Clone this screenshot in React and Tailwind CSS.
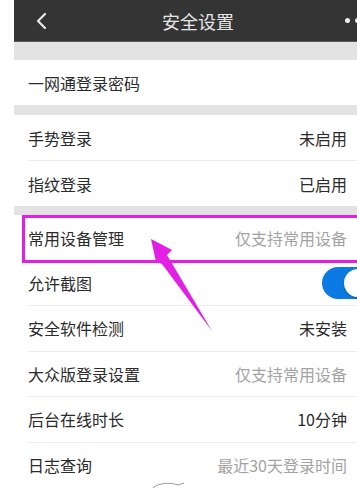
import React from "react";

const font = { fontFamily: '"Noto Sans CJK SC", "Noto Sans", sans-serif' };

function Row({ label, value, gray, divider = true, children }) {
  return (
    <div className="h-[46px] bg-white flex flex-col">
      <div className="flex-1 flex items-center pl-[14px] pr-[10px]">
        <span className="text-[16px] text-[#2b2b2b] leading-none">{label}</span>
        <div className="ml-auto flex items-center">
          {value && (
            <span className={`text-[16px] leading-none ${gray ? "text-[#a3a3a3]" : "text-[#2b2b2b]"}`}>{value}</span>
          )}
          {children}
        </div>
      </div>
      {divider ? <div className="h-px ml-[14px] bg-[#ececec]" /> : null}
    </div>
  );
}

export default function App() {
  return (
    <div className="relative w-[357px] h-[488px] overflow-hidden bg-white flex" style={font}>
      <div className="w-[14px] shrink-0 bg-white" />
      <div className="flex-1 flex flex-col min-w-0">
        {/* header */}
        <div className="h-[42px] shrink-0 bg-[#343434] border-b border-[#5a5a5a] flex items-center">
          <svg width="14" height="18" viewBox="0 0 14 18" className="ml-[20px] shrink-0">
            <path d="M11 2 L4 9 L11 16" fill="none" stroke="#e8e8e8" strokeWidth="2.2" strokeLinecap="round" strokeLinejoin="round" />
          </svg>
          <span className="ml-[114px] text-[18px] text-[#e6e6e6] leading-none">安全设置</span>
          <div className="ml-auto flex items-center gap-[5px] mr-[-3px]">
            <span className="w-[5px] h-[5px] rounded-full bg-[#eeeeee]" />
            <span className="w-[5px] h-[5px] rounded-full bg-[#eeeeee]" />
          </div>
        </div>
        <div className="h-[18px] shrink-0 bg-[#e3e3e3]" />
        <Row label="一网通登录密码" divider={false} />
        <div className="h-[10px] shrink-0 bg-[#e3e3e3]" />
        <Row label="手势登录" value="未启用" />
        <Row label="指纹登录" value="已启用" divider={false} />
        <div className="h-[9px] shrink-0 bg-[#e3e3e3]" />
        <Row label="常用设备管理" value="仅支持常用设备" gray />
        <Row label="允许截图">
          <div className="w-[52px] h-[32px] rounded-full bg-[#0b7be3] flex items-center justify-end pr-[2px] mr-[-27px]">
            <div className="w-[28px] h-[28px] rounded-full bg-white shadow-[0_1px_2px_rgba(0,0,0,0.3)]" />
          </div>
        </Row>
        <Row label="安全软件检测" value="未安装" />
        <Row label="大众版登录设置" value="仅支持常用设备" gray />
        <Row label="后台在线时长" value="10分钟" />
        <Row label="日志查询" value="最近30天登录时间" gray divider={false} />
      </div>

      {/* annotation box */}
      <div className="absolute left-[22px] top-[215px] w-[345px] h-[48px] border-[3px] border-[#e31fe3]" />
      {/* annotation arrow */}
      <svg className="absolute left-0 top-0 pointer-events-none" width="357" height="488" viewBox="0 0 357 488">
        <polygon points="151,239 172,250 167,255 212,331 162,264 156,262" fill="#e31fe3" />
        <path d="M153 488 C158 483, 170 482, 178 485 L184 483" fill="none" stroke="#9a9a9a" strokeWidth="1" />
      </svg>
    </div>
  );
}
